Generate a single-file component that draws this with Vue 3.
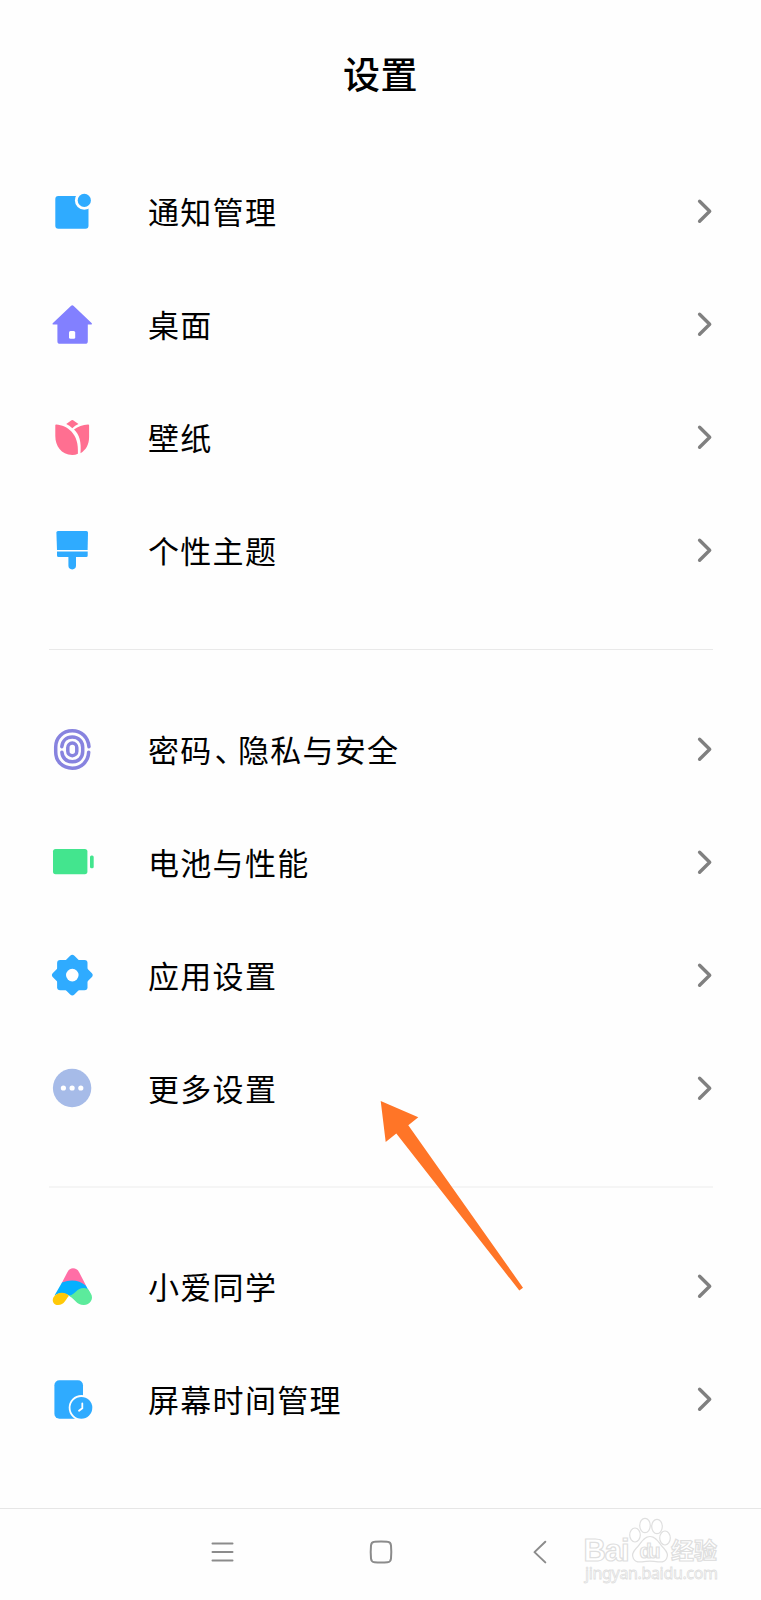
<script setup>
import { ref } from 'vue'

const groups = ref([
	[
		{ icon: 'notice', label: ['通知管理'] },
		{ icon: 'home', label: ['桌面'] },
		{ icon: 'wallpaper', label: ['壁纸'] },
		{ icon: 'theme', label: ['个性主题'] }
	],
	[
		// split after the comma, its right side is tightened
		{ icon: 'finger', label: ['密码', '、', '隐私与安全'] },
		{ icon: 'battery', label: ['电池与性能'] },
		{ icon: 'apps', label: ['应用设置'] },
		{ icon: 'more', label: ['更多设置'] }
	],
	[
		{ icon: 'ai', label: ['小爱同学'] },
		{ icon: 'time', label: ['屏幕时间管理'] }
	]
])
</script>

<template>
	<div class="page">
		<header>设置</header>

		<main>
			<section v-for="(group, i) in groups" :key="i" class="group">
				<div v-for="item in group" :key="item.icon" class="row">
					<svg class="icon" viewBox="0 0 48 49">
						<g v-if="item.icon === 'notice'" fill="#2fabff">
							<rect x="7.3" y="9" width="33.2" height="32.8" rx="3" />
							<circle cx="36.3" cy="13.4" r="9.4" fill="#fefefe" />
							<circle cx="36.3" cy="13.4" r="6.6" />
						</g>
						<g v-else-if="item.icon === 'home'" fill="#8280ff">
							<path d="M22.9 5.9Q24.3 4.6 25.7 5.9L43.8 23.2Q44.6 24.4 43 24.4H39.8V41.2Q39.8 43.8 37.2 43.8H12Q9.4 43.8 9.4 41.2V24.4H5.4Q3.8 24.4 4.7 23.2Z" />
							<rect x="21" y="31" width="6.2" height="7.8" rx="1.5" fill="#fff" />
						</g>
						<g v-else-if="item.icon === 'wallpaper'" fill="#ff6f91">
							<path d="M18.2 11.1L23.5 7.2Q24.3 6.6 25.1 7.2L30.5 11.1Q27 12.5 24.3 15.2Q21.5 12.5 18.2 11.1Z" />
							<path d="M7.3 12.2Q7.3 11.3 8.3 11.4C19 12.4 31.5 20 29.9 40.8Q27.5 42 24.3 42C13 41.5 7.3 33 7.3 23Z" />
							<path d="M26 16.4Q32 11.8 40 11.4Q41.1 11.3 41.1 12.2V24C41.1 31.5 38 37 32.5 40.2C33.5 29 31.5 21.5 26 16.4Z" />
						</g>
						<g v-else-if="item.icon === 'theme'" fill="#2fabff">
							<path d="M10 5H38.4Q40 5 40 6.6L39.6 24.1H9L8.4 6.6Q8.4 5 10 5Z" />
							<path d="M9 25.5H39.7V29.5Q39.7 31 38.2 31H28V39.6A3.8 3.8 0 0 1 20.4 39.6V31H10.5Q9 31 9 29.5Z" />
						</g>
						<g v-else-if="item.icon === 'finger'" fill="none" stroke="#8783df" stroke-width="3.5" stroke-linecap="round">
							<path d="M41 21.7C40 12 33.5 5.8 24.3 5.8C14.5 5.8 7.7 12.8 7.7 22V27C7.7 36.3 14.5 43.2 24.3 43.2C33.5 43.2 40.2 36.5 40.7 27.2" />
							<path d="M13.8 21.7C14.3 16 18.3 12 24.3 12C30.5 12 34.7 16.5 34.7 22.5V26.5C34.7 32.5 30.5 36.8 24.3 36.8C18.5 36.8 14.2 32.8 13.9 27.2" />
							<rect x="19.8" y="18.1" width="9" height="12.6" rx="4.5" />
						</g>
						<g v-else-if="item.icon === 'battery'" fill="#43e58e">
							<rect x="5" y="11" width="34.4" height="25.2" rx="2.6" />
							<rect x="42" y="17.6" width="3.7" height="12.6" rx="1.5" />
						</g>
						<g v-else-if="item.icon === 'apps'" fill="#2fabff">
							<rect x="9.1" y="8.9" width="30.4" height="30.4" rx="3" />
							<rect x="9.1" y="8.9" width="30.4" height="30.4" rx="3" transform="rotate(45 24.3 24.1)" />
							<circle cx="24.3" cy="24.1" r="6.3" fill="#fff" />
						</g>
						<g v-else-if="item.icon === 'more'" fill="#fff">
							<circle cx="24.1" cy="24" r="19.2" fill="#a6bbe8" />
							<circle cx="15.4" cy="24" r="2.6" />
							<circle cx="24.1" cy="24" r="2.6" />
							<circle cx="32.8" cy="24" r="2.6" />
						</g>
						<g v-else-if="item.icon === 'ai'">
							<path d="M13.5 21.5L19.5 10Q21.5 6.3 25 6.3Q29 6.3 31 10L38.5 24.5Q27 16.5 13.5 21.5Z" fill="#ff6ea6" />
							<path d="M6.5 33.5L14 20.5Q28 15.5 38 23.8L42 31L27 38Q16 27.5 6.5 33.5Z" fill="#05b0ff" />
							<path d="M5.5 35.3C9 29.8 17 29.3 21 33.7C18 36.5 16.5 43.1 10 43.1C6 43.1 3.4 39.4 5.5 35.3Z" fill="#ffc908" />
							<path d="M21 33.8C28.5 31.7 28 26 36 25.9Q39 26 40.3 27.5L42.8 31.6C46.2 37.2 42 43.1 35.8 43.1C28.5 43.1 26.8 37 21 33.8Z" fill="#5ceb9c" />
						</g>
						<g v-else fill="#2fabff">
							<rect x="6.4" y="5.3" width="28.6" height="38.4" rx="5" />
							<circle cx="33.4" cy="32.8" r="12.7" fill="#fefefe" />
							<circle cx="33.4" cy="32.8" r="10.9" />
							<path d="M34.3 28.4V33.2L31 35.8" fill="none" stroke="#fff" stroke-width="1.8" stroke-linecap="round" />
						</g>
					</svg>
					<div class="label"><span v-for="part in item.label" :key="part" :class="{ comma: part === '、' }">{{ part }}</span></div>
					<svg class="chevron" viewBox="0 0 16 27">
						<path d="M2.6 3.2L12.7 13.2L2.6 23.2" />
					</svg>
				</div>
			</section>
		</main>

		<nav>
			<svg viewBox="0 0 24 24"><path d="M2.5 3.5H22.5M2.5 12H22.5M2.5 20.5H22.5" /></svg>
			<svg viewBox="0 0 24 24"><path d="M5.5 1.8Q12 1.2 18.5 1.8Q21.7 2 22 5.5Q22.6 12 22 18.5Q21.7 22 18.5 22.2Q12 22.8 5.5 22.2Q2.3 22 2 18.5Q1.4 12 2 5.5Q2.3 2 5.5 1.8Z" /></svg>
			<svg viewBox="0 0 24 24"><path d="M17.3 1.8L6.5 12.1L17.3 22.4" /></svg>
		</nav>

		<!-- pointer to the "more" row -->
		<svg class="arrow" viewBox="0 0 144 191">
			<path d="M.7 1L38.3 17.3L28.3 25.3L143 187.7L139.3 190.5L16.3 33.5L5.7 42Z" />
		</svg>

		<svg class="mark" viewBox="0 0 150 80">
			<text x="3.5" y="46" class="bai" textLength="46">Bai</text>
			<ellipse cx="55" cy="20" rx="5.3" ry="7" />
			<ellipse cx="65" cy="10.5" rx="5.3" ry="7.2" />
			<ellipse cx="77" cy="11.5" rx="5.3" ry="7.2" />
			<ellipse cx="85" cy="23" rx="5.3" ry="7" />
			<path d="M70 21.5C77 21.5 79 29 84 33.5C91 41 86 48 78 46.8Q70 45.5 62 46.8C54 48 49 41 56 33.5C61 29 63 21.5 70 21.5Z" />
			<text x="59.5" y="42.5" class="du" textLength="21">du</text>
			<text x="91" y="44" class="jy" textLength="46">经验</text>
			<text x="5" y="64" class="url" textLength="133">jingyan.baidu.com</text>
		</svg>
	</div>
</template>

<style>
body {
	background: #fefefe;
}
</style>

<style scoped>
.page {
	position: relative;
	display: flex;
	flex-direction: column;
	height: 1600px;
	overflow: hidden;
	background: #fefefe;
	color: #000;
	font-family: "Noto Sans CJK SC", sans-serif;
}

header {
	flex: 0 0 155px;
	box-sizing: border-box;
	padding-top: 45px;
	line-height: 56px;
	text-align: center;
	font-size: 37px;
	font-weight: 500;
	letter-spacing: .6px;
}

main {
	flex: 1;
}

.group + .group {
	margin-top: 42px;
	padding-top: 44px;
	position: relative;
}

.group + .group:last-child {
	padding-top: 43px;
}

.group + .group::before {
	content: "";
	position: absolute;
	left: 49px;
	right: 48px;
	top: 0;
	height: 1px;
	background: #e9e9e9;
}

.group + .group:last-child::before {
	top: -1px;
	height: 2px;
	background: #f5f5f5;
}

.row {
	display: flex;
	align-items: center;
	height: 113px;
	padding: 0 48px;
}

.icon {
	width: 48px;
	height: 49px;
}

.label {
	flex: 1;
	margin-left: 52px;
	padding-bottom: 1px;
	font-size: 31px;
	line-height: 46px;
	letter-spacing: 1.3px;
}

.label .comma {
	margin: 0 -9px 0 2px;
}

.chevron {
	width: 16px;
	height: 27px;
	fill: none;
	stroke: #808080;
	stroke-width: 3.4;
	stroke-linecap: round;
	stroke-linejoin: round;
}

nav {
	flex: 0 0 92px;
	box-sizing: border-box;
	border-top: 1px solid #e6e6e6;
	display: flex;
	justify-content: space-between;
	padding: 31px 209px 0 210px;
}

nav svg {
	width: 24px;
	height: 24px;
	fill: none;
	stroke: #8b8b8b;
	stroke-width: 2;
	stroke-linecap: round;
	stroke-linejoin: round;
}

nav svg:nth-child(2) {
	margin-right: 1px;
}

.arrow {
	position: absolute;
	left: 380px;
	top: 1100px;
	width: 144px;
	height: 191px;
	fill: #ff7527;
}

.mark {
	position: absolute;
	left: 580px;
	top: 1515px;
	width: 150px;
	height: 80px;
	fill: #fff;
	stroke: #dfdfdf;
	stroke-width: 1.2;
}

.mark text {
	font-family: "Liberation Sans", "Noto Sans CJK SC", sans-serif;
	font-weight: 700;
}

.mark .bai {
	font-size: 31px;
}

.mark .du {
	font-size: 20px;
}

.mark .jy {
	font-size: 23px;
}

.mark .url {
	font-family: "Noto Sans", sans-serif;
	font-size: 16px;
	font-weight: 400;
	stroke-width: .8;
}
</style>
